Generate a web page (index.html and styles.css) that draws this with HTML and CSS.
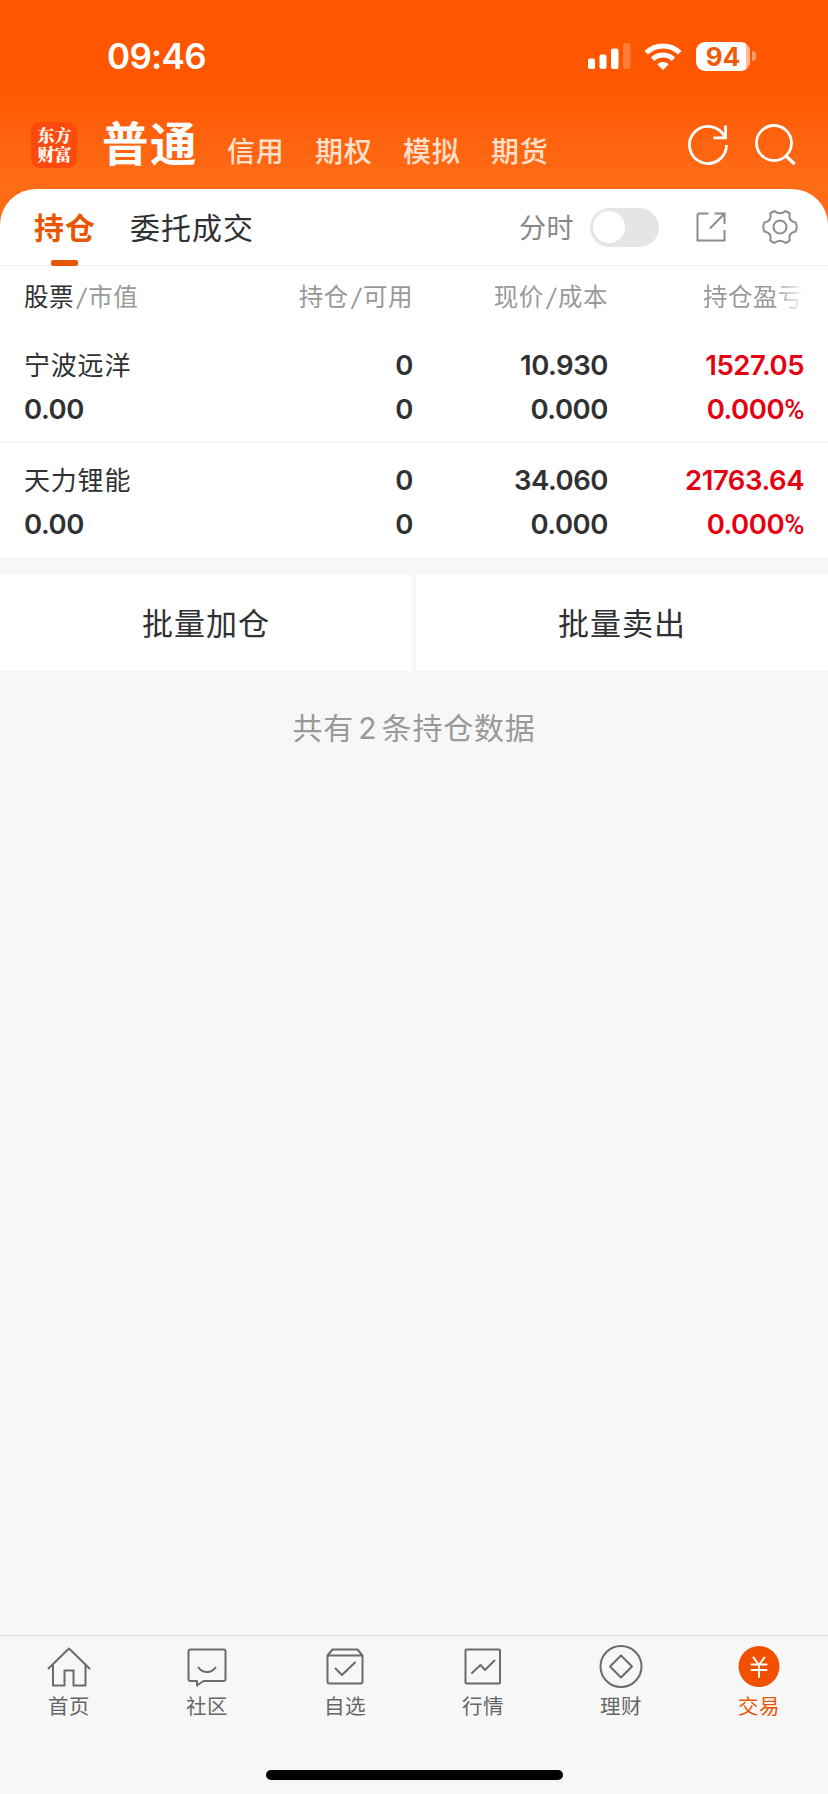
FILE: index.html
```html
<!DOCTYPE html>
<html lang="zh-CN">
    <head>
        <meta charset="UTF-8">
        <title>交易</title>
        <link rel="stylesheet" href="styles.css">
    </head>
    <body>
        <header class="top">
            <div class="status">
                <span class="time">09:46</span>
                <svg class="signal" width="43" height="27" viewBox="0 0 43 27" fill="#fff">
                    <rect x="0" y="15.500" width="7" height="10.500" rx="2"/>
                    <rect x="11.500" y="11.500" width="7" height="14.500" rx="2"/>
                    <rect x="23" y="5.500" width="7.500" height="20.500" rx="2"/>
                    <rect x="35" y="0" width="7.500" height="26" rx="2" opacity=".22"/>
                </svg>
                <svg class="wifi" width="38" height="27" viewBox="0 0 38 27" fill="none" stroke="#fff" stroke-width="5">
                    <path d="M2.300 9.800a24 24 0 0 1 33.400 0"/>
                    <path d="M8.600 16.300a15 15 0 0 1 20.800 0"/>
                    <path d="M19 27l-5.700-5.700a8.300 8.300 0 0 1 11.400 0z" fill="#fff" stroke="none"/>
                </svg>
                <div class="battery"><span class="battery-level">94</span></div>
                <span class="battery-cap"></span>
            </div>
            <div class="accounts">
                <div class="logo">东方<br>财富</div>
                <span class="account current">普通</span>
                <span class="account">信用</span>
                <span class="account">期权</span>
                <span class="account">模拟</span>
                <span class="account">期货</span>
                <svg class="refresh" width="42" height="42" viewBox="0 0 42 42" fill="none" stroke="#fff" stroke-width="2.800">
                    <path d="M39.500 21A18.500 18.500 0 1 1 37.500 12.600"/>
                    <path d="M38.500 1.500v12.300H26.500"/>
                </svg>
                <svg class="search" width="42" height="42" viewBox="0 0 42 42" fill="none" stroke="#fff" stroke-width="2.800">
                    <circle cx="20" cy="19" r="17.500"/>
                    <path d="M31.500 31.500l9 8.500" stroke-width="3.500"/>
                </svg>
            </div>
        </header>

        <main class="panel">
            <nav class="tabs">
                <span class="tab active">持仓</span>
                <span class="tab">委托成交</span>
                <span class="minute">分时</span>
                <span class="toggle"></span>
                <svg class="share" width="30" height="30" viewBox="0 0 30 30" fill="none" stroke="#8c8c8c" stroke-width="2">
                    <path d="M12.500 1.500H3a1.500 1.500 0 0 0-1.500 1.500v25.500h27V18"/>
                    <path d="M14 16.500L28 2M18.500 1.500h10V12"/>
                </svg>
                <svg class="gear" width="36" height="36" viewBox="0 0 36 36" fill="none" stroke="#8c8c8c" stroke-width="2" stroke-linejoin="round">
                    <path d="M12.500 2Q18 6.500 23.500 2l4.300 2.300C26.500 10 28.500 12.500 33.500 13.500q2.500 4.500 0 9C28.500 23.500 26.500 26 27.800 31.700L23.500 34Q18 29.500 12.500 34l-4.300-2.300C9.500 26 7.500 23.500 2.500 22.500q-2.500-4.500 0-9C7.500 12.500 9.500 10 8.200 4.300z"/>
                    <circle cx="18" cy="18" r="6.500"/>
                </svg>
            </nav>

            <div class="row head">
                <span class="name"><span class="dark">股票</span><i class="slash">/</i>市值</span>
                <span>持仓<i class="slash">/</i>可用</span>
                <span>现价<i class="slash">/</i>成本</span>
                <span class="profit">持仓盈亏</span>
            </div>
            <div class="row stock">
                <span class="name">宁波远洋</span>
                <span>0</span>
                <span>10.930</span>
                <span class="red">1527.05</span>
                <span class="value">0.00</span>
                <span>0</span>
                <span>0.000</span>
                <span class="red">0.000<b class="percent">%</b></span>
            </div>
            <div class="row stock">
                <span class="name">天力锂能</span>
                <span>0</span>
                <span>34.060</span>
                <span class="red">21763.64</span>
                <span class="value">0.00</span>
                <span>0</span>
                <span>0.000</span>
                <span class="red">0.000<b class="percent">%</b></span>
            </div>
        </main>

        <div class="actions">
            <div class="action">批量加仓</div>
            <div class="action">批量卖出</div>
        </div>
        <p class="count">共有 2 条持仓数据</p>

        <footer class="bottom">
            <nav class="menu">
                <a class="item">
                    <svg width="46" height="46" viewBox="0 0 46 46">
                        <path d="M2.500 23.500L23 3.500l20.500 20M7 20v20.500h11.500v-15h9v15H39.500V20"/>
                    </svg>
                    首页
                </a>
                <a class="item">
                    <svg width="46" height="46" viewBox="0 0 46 46">
                        <path d="M6.500 4.500h33a2 2 0 0 1 2 2v27.500a2 2 0 0 1-2 2H19.500l-6.500 4.500v-4.500H6.500a2 2 0 0 1-2-2V6.500a2 2 0 0 1 2-2z"/>
                        <path d="M14.500 22.500c4 6 13 6 17 0"/>
                    </svg>
                    社区
                </a>
                <a class="item">
                    <svg width="46" height="46" viewBox="0 0 46 46">
                        <path d="M5.500 10.500h35v26a2 2 0 0 1-2 2h-31a2 2 0 0 1-2-2zl5-6h25l5 6"/>
                        <path d="M13.500 23.500l6.500 6.500 13-12.500"/>
                    </svg>
                    自选
                </a>
                <a class="item">
                    <svg width="46" height="46" viewBox="0 0 46 46">
                        <rect x="5.500" y="4.500" width="34.500" height="34" rx="1"/>
                        <path d="M12 28l8.500-8 4.500 5 9.500-9.500"/>
                    </svg>
                    行情
                </a>
                <a class="item">
                    <svg width="46" height="46" viewBox="0 0 46 46">
                        <circle cx="23" cy="21.500" r="20.500"/>
                        <path d="M23 10.500l11 11-11 11-11-11z"/>
                    </svg>
                    理财
                </a>
                <a class="item on">
                    <svg width="46" height="46" viewBox="0 0 46 46">
                        <circle class="coin" cx="23" cy="21.500" r="20.500"/>
                        <path class="yen" d="M17.500 12.500l5.500 7.500 5.500-7.500M23 20v12M15.500 19.500h15M15.500 25h15"/>
                    </svg>
                    交易
                </a>
            </nav>
            <div class="home-bar"></div>
        </footer>
    </body>
</html>
```

FILE: styles.css
```css
* {
    box-sizing: border-box;
}
html, body {
    margin: 0;
    height: 100%;
}
body {
    display: flex;
    flex-direction: column;
    background: #f7f7f7;
    font-family: Inter, "Noto Sans CJK SC", sans-serif;
    color: #303133;
    overflow: hidden;
}
svg {
    display: block;
    flex: none;
}

/* orange header */
.top {
    height: 230px;
    flex: none;
    background: linear-gradient(#ff5600 0, #ff5600 75px, #ff6c18 189px, #ff6c18);
}
.status {
    display: flex;
    align-items: center;
    height: 112px;
    padding-left: 107px;
}
.time {
    width: 481px;
    font-size: 35px;
    font-weight: 600;
    letter-spacing: -.7px;
    color: #fff;
}
.wifi {
    margin-left: 13px;
}
.battery {
    width: 54px;
    height: 29px;
    margin-left: 14px;
    border-radius: 9px;
    background: linear-gradient(90deg, #fff 50px, #ffb894 50px);
    text-align: center;
}
.battery-level {
    font-size: 26px;
    line-height: 29px;
    font-weight: 700;
    color: #f25a08;
}
.battery-cap {
    width: 4px;
    height: 10px;
    margin-left: 2px;
    border-radius: 0 5px 5px 0;
    background: #ff9c6b;
}
.accounts {
    display: flex;
    align-items: center;
    height: 66px;
    padding-left: 31px;
}
.logo {
    width: 46px;
    height: 46px;
    margin-right: 25px;
    padding: 3px 0 0 1px;
    border-radius: 9px;
    background: #ff4a0d;
    color: #fff;
    font: 900 17px/19px "Noto Serif CJK SC", "Noto Sans CJK SC", serif;
    text-align: center;
}
.account {
    width: 88px;
    padding-top: 13px;
    font-size: 28px;
    font-weight: 500;
    letter-spacing: .8px;
    line-height: 40px;
    color: #ffe0cc;
}
.current {
    width: 125px;
    padding: 0;
    font-size: 46.500px;
    font-weight: 700;
    letter-spacing: 1.500px;
    line-height: 58px;
    margin-top: -2px;
    color: #fff;
}
.refresh {
    margin-left: 108px;
}
.search {
    margin-left: 25px;
}

/* positions */
.panel {
    flex: none;
    margin-top: -41px;
    border-radius: 36px 36px 0 0;
    background: #fff;
}
.tabs {
    display: flex;
    align-items: center;
    height: 77px;
    padding-left: 34px;
    border-bottom: 1px solid #f0f0f0;
}
.tab {
    position: relative;
    width: 389px;
    margin-top: -3px;
    font-size: 30px;
    letter-spacing: 1px;
}
.active {
    width: 96px;
    font-weight: 700;
    color: #ea5504;
}
.active::after {
    content: "";
    position: absolute;
    left: 17px;
    bottom: -18px;
    width: 27px;
    height: 6px;
    border-radius: 2px;
    background: #ea5504;
}
.minute {
    width: 71px;
    margin-top: -1px;
    font-size: 27px;
    letter-spacing: .5px;
    color: #888;
}
.toggle {
    width: 69px;
    height: 39px;
    padding: 3px;
    border-radius: 20px;
    background: #e5e5e5;
}
.toggle::before {
    content: "";
    display: block;
    width: 32px;
    height: 32px;
    border-radius: 50%;
    background: #fff;
}
.share {
    margin-left: 37px;
}
.gear {
    margin-left: 36px;
}
.row {
    display: grid;
    grid-template-columns: 192px 197px 195px 196px;
    padding: 0 24px;
    text-align: right;
}
.name, .value {
    text-align: left;
}
.head {
    height: 62px;
    line-height: 62px;
    font-size: 24.500px;
    letter-spacing: .5px;
    color: #999;
}
.dark {
    color: #303133;
}
.slash {
    padding: 0 2px 0 3px;
}
.profit {
    padding-left: 95px;
    text-align: left;
    white-space: nowrap;
    -webkit-mask-image: linear-gradient(90deg, #000 165px, transparent 198px);
    mask-image: linear-gradient(90deg, #000 165px, transparent 198px);
}
.stock {
    grid-template-rows: 44px 44px;
    height: 116px;
    padding-top: 15px;
    border-bottom: 2px solid #f5f5f5;
    line-height: 44px;
    font-size: 27.500px;
    font-weight: 600;
    letter-spacing: -.45px;
}
.head + .stock {
    height: 115px;
}
.stock .name {
    padding-top: 1px;
    font-size: 26px;
    font-weight: 400;
    letter-spacing: .8px;
}
.percent {
    font-family: Roboto, sans-serif;
    font-weight: 500;
    line-height: 1;
}
.red {
    color: #e60012;
}

/* buttons */
.actions {
    display: flex;
    gap: 4px;
    flex: none;
    margin-top: 16px;
}
.action {
    flex: 1;
    height: 96px;
    background: #fff;
    font-size: 31px;
    letter-spacing: 1px;
    line-height: 97px;
    text-align: center;
}
.count {
    margin: 36px 0 0;
    font-size: 30px;
    letter-spacing: .8px;
    word-spacing: -5px;
    line-height: 43px;
    text-align: center;
    color: #999;
}

/* bottom menu */
.bottom {
    height: 159px;
    margin-top: auto;
    border-top: 1px solid #e2e2e6;
}
.menu {
    display: flex;
    height: 134px;
    padding-top: 9px;
}
.item {
    flex: 1;
    display: flex;
    flex-direction: column;
    align-items: center;
    font-size: 20.500px;
    letter-spacing: .5px;
    line-height: 31px;
    color: #666;
}
.item svg {
    fill: none;
    stroke: #6b6b6b;
    stroke-width: 2;
    stroke-linejoin: round;
    stroke-linecap: round;
}
.on {
    color: #ea5504;
}
.item .coin {
    fill: #f05000;
    stroke: none;
}
.item .yen {
    stroke: #fff;
}
.home-bar {
    width: 297px;
    height: 10px;
    margin: 0 auto;
    border-radius: 5px;
    background: #000;
}
```
